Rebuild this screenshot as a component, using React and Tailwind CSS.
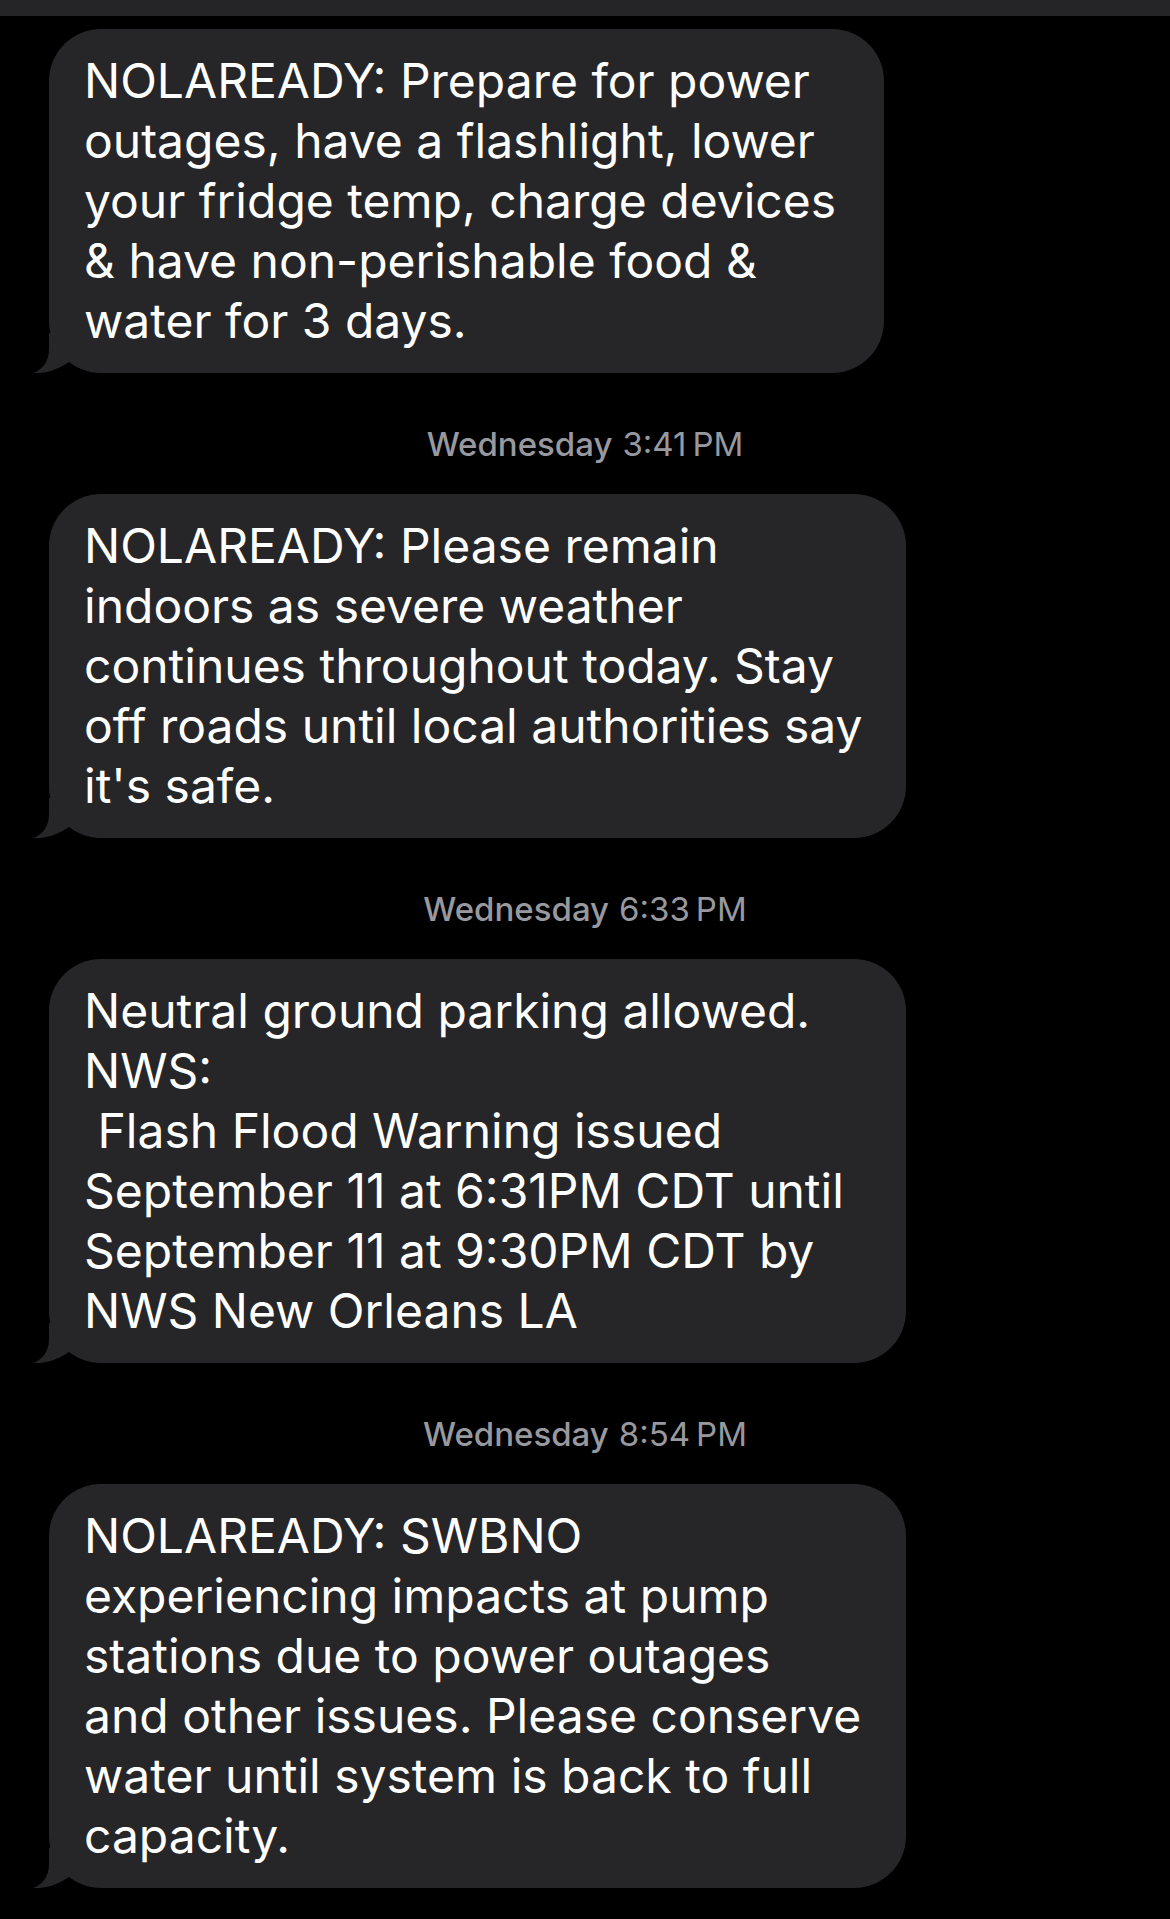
const messages = [
  {
    lines: [
      'NOLAREADY: Prepare for power',
      'outages, have a flashlight, lower',
      'your fridge temp, charge devices',
      '& have non-perishable food &',
      'water for 3 days.',
    ],
    width: 'w-[835px]',
  },
  {
    time: '3:41\u202FPM',
    lines: [
      'NOLAREADY: Please remain',
      'indoors as severe weather',
      'continues throughout today. Stay',
      'off roads until local authorities say',
      "it's safe.",
    ],
    width: 'w-[857px]',
  },
  {
    time: '6:33\u202FPM',
    lines: [
      'Neutral ground parking allowed.',
      'NWS:',
      ' Flash Flood Warning issued',
      'September 11 at 6:31PM CDT until',
      'September 11 at 9:30PM CDT by',
      'NWS New Orleans LA',
    ],
    width: 'w-[857px]',
  },
  {
    time: '8:54\u202FPM',
    lines: [
      'NOLAREADY: SWBNO',
      'experiencing impacts at pump',
      'stations due to power outages',
      'and other issues. Please conserve',
      'water until system is back to full',
      'capacity.',
    ],
    width: 'w-[857px]',
  },
]

const Tail = () => (
  <svg
    className="absolute left-[-16px] bottom-0"
    width="40"
    height="40"
    viewBox="0 0 40 40"
  >
    <path d="M16 0 L16 16 C16 29 9 37 0 40 C13 41 26 36 36 29 L36 0 Z" fill="#262628" />
  </svg>
)

const Timestamp = ({ time }) => (
  <div className="flex justify-center mt-[52px] mb-[29px] h-[40px] items-center text-[33px] text-[#98989f]">
    <span className="font-medium">Wednesday</span>
    <span className="ml-[10px]">{time}</span>
  </div>
)

const Bubble = ({ lines, width }) => (
  <div className="pl-[49px]">
    <div className={`relative ${width} bg-[#262628] rounded-[52px] pl-[35px] py-[22px] text-white text-[48px] leading-[60px]`}>
      {lines.map((line, i) => (
        <div key={i} className="whitespace-pre">{line}</div>
      ))}
      <Tail />
    </div>
  </div>
)

export default function App() {
  return (
    <div
      className="w-[1170px] h-[1919px] bg-black overflow-hidden"
      style={{ fontFamily: 'Inter, "Noto Sans", sans-serif' }}
    >
      <div className="h-[16px] bg-[#252527]" />
      <div className="pt-[13px]">
        {messages.map((m, i) => (
          <div key={i}>
            {m.time && <Timestamp time={m.time} />}
            <Bubble lines={m.lines} width={m.width} />
          </div>
        ))}
      </div>
    </div>
  )
}
